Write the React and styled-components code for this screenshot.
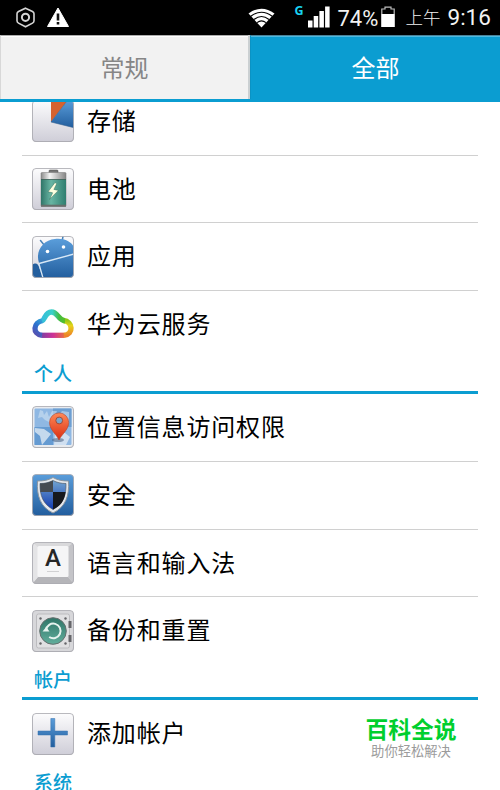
import styled, { createGlobalStyle } from "styled-components"

const GlobalStyle = createGlobalStyle`
    * {
        box-sizing: border-box;
    }
    body {
        margin: 0;
        background-color: #FFF;
        font-family: "Noto Sans CJK SC", sans-serif;
    }
`

const Screen = styled.div`
    position: relative;
    display: flex;
    flex-direction: column;
    width: 500px;
    height: 790px;
    overflow: hidden;
    background-color: #FFF;
`

const StatusBar = styled.header`
    display: flex;
    flex: none;
    justify-content: space-between;
    height: 35px;
    padding: 0 8.5px 0 15px;
    background-color: #000;
    color: #F2F2F2;
`

const StatusGroup = styled.div`
    display: flex;
    align-items: center;
    height: 35px;

    svg {
        display: block;
        flex: none;
    }
`

const StatusText = styled.span`
    flex: none;
    width: ${({ $width }) => $width}px;
    margin-left: ${({ $gap }) => $gap}px;
    padding-top: ${({ $drop }) => $drop || 0}px;
    font-family: Roboto, "Noto Sans CJK SC", sans-serif;
    font-size: ${({ $size }) => $size}px;
    font-weight: ${({ $weight }) => $weight || 400};
    line-height: 35px;
    white-space: nowrap;
`

const NetworkType = styled.span`
    width: 13px;
    margin-left: 20px;
    padding-bottom: 13px;
    color: #19D3F2;
    font-family: "Noto Sans", sans-serif;
    font-size: 12.5px;
    font-weight: 700;
    line-height: 14px;
`

const Tabs = styled.nav`
    display: flex;
    flex: none;
    gap: 2px;
    height: 67px;
    background-color: #CBD0D2;
    border-bottom: 3px solid #0B9DD1;
`

const Tab = styled.button`
    width: ${({ $active }) => ($active ? "250px" : "248px")};
    height: 64px;
    padding: 0 0 1px;
    border: none;
    border-top: 1px solid ${({ $active }) => ($active ? "#4A8299" : "#ADADAD")};
    border-left: 1px solid ${({ $active }) => ($active ? "#0B93C4" : "#D8D8D8")};
    background-color: ${({ $active }) => ($active ? "#0B9DD1" : "#F2F2F2")};
    box-shadow: inset 0 1px 0 ${({ $active }) => ($active ? "#50B9DF" : "#FFF")};
    color: ${({ $active }) => ($active ? "#FFF" : "#868686")};
    font-family: inherit;
    font-size: 24px;
    line-height: 36px;
`

const List = styled.main`
    flex: 1;
    min-height: 0;
    padding: 0 22px;
    overflow: hidden;
`

const ListInner = styled.div`
    margin-top: -14px;
`

const Row = styled.div`
    display: flex;
    align-items: center;
    gap: 13px;
    height: 67.7px;
    padding-left: 10px;
    border-bottom: 1px solid ${({ $last }) => ($last ? "transparent" : "#D0D0D0")};
    color: #000;

    svg {
        display: block;
        flex: none;
    }
`

const Label = styled.span`
    padding-bottom: 2.5px;
    font-size: 24px;
    letter-spacing: 0.85px;
    line-height: 36px;
    white-space: nowrap;
`

const SectionTitle = styled.h2`
    height: 35.4px;
    margin: 0;
    padding: 0 0 0 12px;
    border-bottom: 3px solid #0B9DD1;
    color: #0B9DD1;
    font-size: 19px;
    font-weight: 500;
    line-height: 28px;
`

const Watermark = styled.div`
    position: absolute;
    top: 713px;
    left: 361px;
    width: 100px;
    text-align: center;
    white-space: nowrap;

    strong {
        display: block;
        color: #00CF2E;
        font-size: 22.8px;
        font-weight: 700;
        line-height: 32px;
    }

    span {
        display: block;
        color: #9B9B9B;
        font-size: 13.3px;
        line-height: 12px;
    }
`

function Gradients() {
    return (
        <svg width="0" height="0" style={{ position: "absolute" }}>
            <defs>
                <linearGradient id="tile" x1="0" y1="0" x2="0" y2="1">
                    <stop offset="0" stopColor="#FCFCFD" />
                    <stop offset="1" stopColor="#CFCED8" />
                </linearGradient>
                <linearGradient id="blue" x1="0" y1="0" x2="0" y2="1">
                    <stop offset="0" stopColor="#5A9DDA" />
                    <stop offset="1" stopColor="#225E9E" />
                </linearGradient>
                <linearGradient id="metal" x1="0" y1="0" x2="1" y2="0">
                    <stop offset="0" stopColor="#8B8B8B" />
                    <stop offset="0.35" stopColor="#F4F4F4" />
                    <stop offset="1" stopColor="#858585" />
                </linearGradient>
                <linearGradient id="green" x1="0" y1="0" x2="1" y2="0">
                    <stop offset="0" stopColor="#2F7568" />
                    <stop offset="0.4" stopColor="#68B5A3" />
                    <stop offset="1" stopColor="#2F7E70" />
                </linearGradient>
                <linearGradient id="dial" x1="0" y1="0" x2="0" y2="1">
                    <stop offset="0" stopColor="#2F7568" />
                    <stop offset="1" stopColor="#62AE9C" />
                </linearGradient>
                <linearGradient id="pin" x1="0" y1="0" x2="0" y2="1">
                    <stop offset="0" stopColor="#FF8957" />
                    <stop offset="1" stopColor="#D92D12" />
                </linearGradient>
                <linearGradient id="shield" x1="0" y1="0" x2="0" y2="1">
                    <stop offset="0" stopColor="#73A5D2" />
                    <stop offset="1" stopColor="#123BB0" />
                </linearGradient>
                <clipPath id="tileClip">
                    <rect x="0.5" y="0.5" width="41" height="41" rx="3.5" />
                </clipPath>
            </defs>
        </svg>
    )
}

function Tile({ fill = "url(#tile)", children }) {
    return (
        <svg width="42" height="44" viewBox="0 0 42 44">
            <rect x="0.3" y="1.8" width="41.4" height="41.2" rx="4" fill="#8D8D94" opacity="0.75" />
            <g transform="translate(0 1)">
                <rect x="0.5" y="0.5" width="41" height="41" rx="3.5" fill={fill} />
                <g clipPath="url(#tileClip)">{children}</g>
                <rect x="0.5" y="0.5" width="41" height="41" rx="3.5" fill="none" stroke="#AAAAB0" strokeWidth="0.8" />
            </g>
        </svg>
    )
}

function StorageIcon() {
    return (
        <Tile>
            <path d="M19 22V0h17z" fill="#D5622F" />
            <path d="M19 22L36 0h6v27.7z" fill="url(#blue)" />
            <path d="M19 22L35.5 0.5M19 22l23 5.7" stroke="#315F91" strokeWidth="0.6" />
        </Tile>
    )
}

function BatteryIcon() {
    return (
        <Tile>
            <rect x="17" y="2" width="9" height="4" rx="1" fill="#777" stroke="#444" strokeWidth="0.5" />
            <rect x="9" y="4.5" width="25" height="34" rx="1" fill="url(#metal)" stroke="#777" strokeWidth="0.5" />
            <rect x="9" y="11.5" width="25" height="26" fill="url(#green)" />
            <path d="M9 11.5h25" stroke="#365D53" strokeWidth="0.8" />
            <rect x="9" y="36.7" width="25" height="2" fill="#686E6C" />
            <path d="M23 14.5l-7 9.3 4.6 1-3 6.6 8.8-9-4.5-1 2.8-5.6z" fill="#FFFFE0" stroke="#356E5C" strokeWidth="0.5" />
        </Tile>
    )
}

function AppsIcon() {
    return (
        <Tile>
            <g stroke="#4A83B8" strokeWidth="1.5" strokeLinecap="round">
                <path d="M8.5 4.5l4 5M31 0.5l-1 5" />
            </g>
            <path d="M7 27C3 15 11 4 23 3c9-1 16 2.5 19 8v31H10z" fill="url(#blue)" />
            <path d="M0 29c4-3 6-1 7 2l4 11H0z" fill="#245F9E" />
            <path d="M7 27.5L42 18M7 28l4 14" stroke="#D8E8F6" strokeWidth="1.3" fill="none" />
            <circle cx="15.5" cy="15.5" r="1.8" fill="#FFF" />
            <circle cx="31.5" cy="11" r="1.8" fill="#FFF" />
        </Tile>
    )
}

// four strokes, each with its own gradient, so that the colour runs round the cloud
function CloudIcon() {
    return (
        <svg width="42" height="44" viewBox="0 0 42 44" fill="none" strokeWidth="5.3">
            <defs>
                <linearGradient id="cloudLeft" x1="0" y1="34" x2="14" y2="16" gradientUnits="userSpaceOnUse">
                    <stop stopColor="#6545A6" />
                    <stop offset="0.5" stopColor="#2D70CE" />
                    <stop offset="1" stopColor="#36BDDB" />
                </linearGradient>
                <linearGradient id="cloudTop" x1="10" y1="0" x2="36" y2="0" gradientUnits="userSpaceOnUse">
                    <stop stopColor="#36BDDB" />
                    <stop offset="0.4" stopColor="#3BD0C8" />
                    <stop offset="0.65" stopColor="#42BC45" />
                    <stop offset="1" stopColor="#61BF17" />
                </linearGradient>
                <linearGradient id="cloudRight" x1="0" y1="18" x2="0" y2="34" gradientUnits="userSpaceOnUse">
                    <stop stopColor="#8FC715" />
                    <stop offset="0.35" stopColor="#E7D31A" />
                    <stop offset="1" stopColor="#EE8028" />
                </linearGradient>
                <linearGradient id="cloudBottom" x1="6" y1="0" x2="36" y2="0" gradientUnits="userSpaceOnUse">
                    <stop stopColor="#6545A6" />
                    <stop offset="0.5" stopColor="#CE3197" />
                    <stop offset="1" stopColor="#EE8028" />
                </linearGradient>
            </defs>
            <path d="M9.5 33.3h23" stroke="url(#cloudBottom)" />
            <path d="M32 33.3c10-1 9-13.8-.5-14.8" stroke="url(#cloudRight)" />
            <path d="M10 33.3c-10-1-9-13.3 1-14.8" stroke="url(#cloudLeft)" />
            <path d="M10 18.8C13 18 13 10 19.5 10S26 18.5 33 18.8" stroke="url(#cloudTop)" />
        </svg>
    )
}

function LocationIcon() {
    return (
        <Tile fill="#E8EBEF">
            <rect x="2.5" y="2.5" width="37" height="36.5" rx="1" fill="#8FB8E3" />
            <path d="M2.5 21H21v18H2.5z" fill="#659BD2" />
            <path d="M21 2.5h18.5V21H21z" fill="#6D9FD2" />
            <path d="M8 4l3 1 1 4 3-4 2 6 3-6h5l-2 5 4-1 3-4 7 1v13l-6-2-2 4-6-4-4 3-2-4-4-2-3-3-4 1z" fill="#DCE9F5" opacity="0.5" />
            <path d="M3 22l9 1 7 5-4 5-5 6-2-9-5-4zM23 25l10 2 5 4-4 8H22z" fill="#E5EDF5" opacity="0.75" />
            <ellipse cx="26" cy="34" rx="6" ry="2" fill="#3A5274" opacity="0.5" />
            <path d="M27 34c-1.8-5-9.5-10-9.5-17.5a9.6 9.6 0 0 1 19.2 0C36.7 24 29 29 27 34z" fill="url(#pin)" stroke="#B64329" strokeWidth="0.6" />
            <circle cx="27.2" cy="14.5" r="3.4" fill="#78A6CE" stroke="#A64A32" strokeWidth="1" />
        </Tile>
    )
}

function SecurityIcon() {
    return (
        <Tile fill="url(#blue)">
            <path d="M21 3.5c5 3 10 3.5 15.5 3.5 1 15-3 26-15.5 32C8.5 33 4.5 22 5.5 7 11 7 16 6.5 21 3.5z" fill="#E4E8ED" stroke="#8D969F" strokeWidth="1" />
            <path d="M21 6.5c4 2 8 3 13 3 .3 12-3 20.5-13 26C11 30 7.7 21.5 8 9.5c5 0 9-1 13-3z" fill="url(#shield)" stroke="#48505B" strokeWidth="0.6" />
            <path d="M21 6.5V18H8.3L8 9.5c5 0 9-1 13-3z" fill="#454B52" />
            <path d="M21 18h12.6c-1 8.5-5 14-12.6 17.5z" fill="#17191E" />
        </Tile>
    )
}

function LanguageIcon() {
    return (
        <Tile fill="#D9D9DB">
            <path d="M0 42l6-7h30l6 7z" fill="#B5B5B9" />
            <path d="M36 5l6-5v42l-6-7z" fill="#C4C4C8" />
            <path d="M0 0l6 5v30l-6 7z" fill="#E4E4E6" />
            <rect x="5.5" y="4" width="31" height="31" rx="1.5" fill="#F5F5F6" />
            <text x="21" y="24" textAnchor="middle" fontFamily="Roboto, sans-serif" fontSize="24" fontWeight="500" fill="#262626">A</text>
            <path d="M15 29.5h12" stroke="#C8C8CA" strokeWidth="0.8" />
        </Tile>
    )
}

function BackupIcon() {
    return (
        <Tile fill="#D7D7DA">
            <rect x="4.5" y="4" width="33" height="34" rx="2" fill="#E0E0E2" stroke="#B4B4B8" strokeWidth="0.8" />
            <g fill="#66666A">
                <circle cx="8.5" cy="8.5" r="1.2" />
                <circle cx="33.5" cy="8.5" r="1.2" />
                <circle cx="8.5" cy="33.5" r="1.2" />
                <circle cx="33.5" cy="33.5" r="1.2" />
                <rect x="36.5" y="11" width="3" height="7" />
                <rect x="36.5" y="25" width="3" height="7" />
            </g>
            <circle cx="21" cy="21" r="13.3" fill="url(#dial)" stroke="#66706F" strokeWidth="1" />
            <path d="M14 20a7.3 7.3 0 1 1 3.2 7" fill="none" stroke="#E6F2EE" strokeWidth="2" />
            <path d="M10.5 21.5l3.7-4.5 3.3 4.5z" fill="#E6F2EE" />
        </Tile>
    )
}

function AddIcon() {
    return (
        <Tile>
            <path d="M18.8 5.5h4V18h12.7v4H22.8v12h-4V22H6v-4h12.8z" fill="url(#blue)" stroke="#3471AC" strokeWidth="0.5" />
        </Tile>
    )
}

const sections = [
    {
        rows: [
            { label: "存储", Icon: StorageIcon },
            { label: "电池", Icon: BatteryIcon },
            { label: "应用", Icon: AppsIcon },
            { label: "华为云服务", Icon: CloudIcon },
        ],
    },
    {
        title: "个人",
        rows: [
            { label: "位置信息访问权限", Icon: LocationIcon },
            { label: "安全", Icon: SecurityIcon },
            { label: "语言和输入法", Icon: LanguageIcon },
            { label: "备份和重置", Icon: BackupIcon },
        ],
    },
    {
        title: "帐户",
        rows: [{ label: "添加帐户", Icon: AddIcon }],
    },
    {
        title: "系统",
        rows: [],
    },
]

function Section({ title, rows }) {
    return (
        <section>
            {title && <SectionTitle>{title}</SectionTitle>}
            {rows.map(({ label, Icon }, i) => (
                <Row key={label} $last={i === rows.length - 1}>
                    <Icon />
                    <Label>{label}</Label>
                </Row>
            ))}
        </section>
    )
}

export default function App() {
    return (
        <Screen>
            <GlobalStyle />
            <Gradients />
            <StatusBar>
                <StatusGroup>
                    <svg width="22" height="35" viewBox="0 0 22 35" fill="none" stroke="#D4D4D4">
                        <path d="M10.5 8.2l7 3.3q1.5.8 1.5 2.3v7q0 1.5-1.5 2.3l-7 3.7-7-3.7Q2 22.3 2 20.8v-7q0-1.5 1.5-2.3z" strokeWidth="1.6" />
                        <circle cx="10.5" cy="17.3" r="3.6" strokeWidth="2" />
                    </svg>
                    <svg width="34" height="35" viewBox="-9 0 34 35">
                        <path d="M12 8l10.5 18.5h-21z" fill="#FFF" stroke="#FFF" strokeWidth="1" strokeLinejoin="round" />
                        <path d="M12 13.5v7M12 22v2.5" stroke="#111" strokeWidth="2.6" />
                    </svg>
                </StatusGroup>
                <StatusGroup>
                    <svg width="27" height="35" viewBox="0 0 27 35">
                        <path d="M13.5 27.5L.5 13.5Q13.5 3.8 26.5 13.5z" fill="#FFF" />
                        <path d="M2.8 16.2q10.7-8 21.4 0M6 19.5q7.5-6 15 0M9 22.7q4.5-3.7 9 0" fill="none" stroke="#000" strokeWidth="1.1" />
                    </svg>
                    <NetworkType>G</NetworkType>
                    <svg width="22" height="35" viewBox="0 0 22 35" fill="#FFF">
                        <rect x="0" y="20.5" width="4.5" height="7" />
                        <rect x="5.7" y="16" width="4.5" height="11.5" />
                        <rect x="11.4" y="11" width="4.5" height="16.5" />
                        <rect x="17.1" y="6.5" width="4.5" height="21" />
                    </svg>
                    <StatusText $width={43} $gap={8} $size={22} $drop={1}>74%</StatusText>
                    <svg width="14" height="35" viewBox="0 0 14 35">
                        <path d="M4 9V7.2h6V9h3.2v17.5H.8V9z" fill="none" stroke="#BDBDBD" strokeWidth="1.2" />
                        <rect x="0.5" y="14" width="13" height="13" fill="#FFF" />
                    </svg>
                    <StatusText $width={35} $gap={11} $size={17.5} $drop={2} $weight={300}>上午</StatusText>
                    <StatusText $width={44} $gap={7} $size={22.5}>9:16</StatusText>
                </StatusGroup>
            </StatusBar>
            <Tabs>
                <Tab>常规</Tab>
                <Tab $active>全部</Tab>
            </Tabs>
            <List>
                <ListInner>
                    {sections.map((section, i) => (
                        <Section key={i} {...section} />
                    ))}
                </ListInner>
            </List>
            <Watermark>
                <strong>百科全说</strong>
                <span>助你轻松解决</span>
            </Watermark>
        </Screen>
    )
}
